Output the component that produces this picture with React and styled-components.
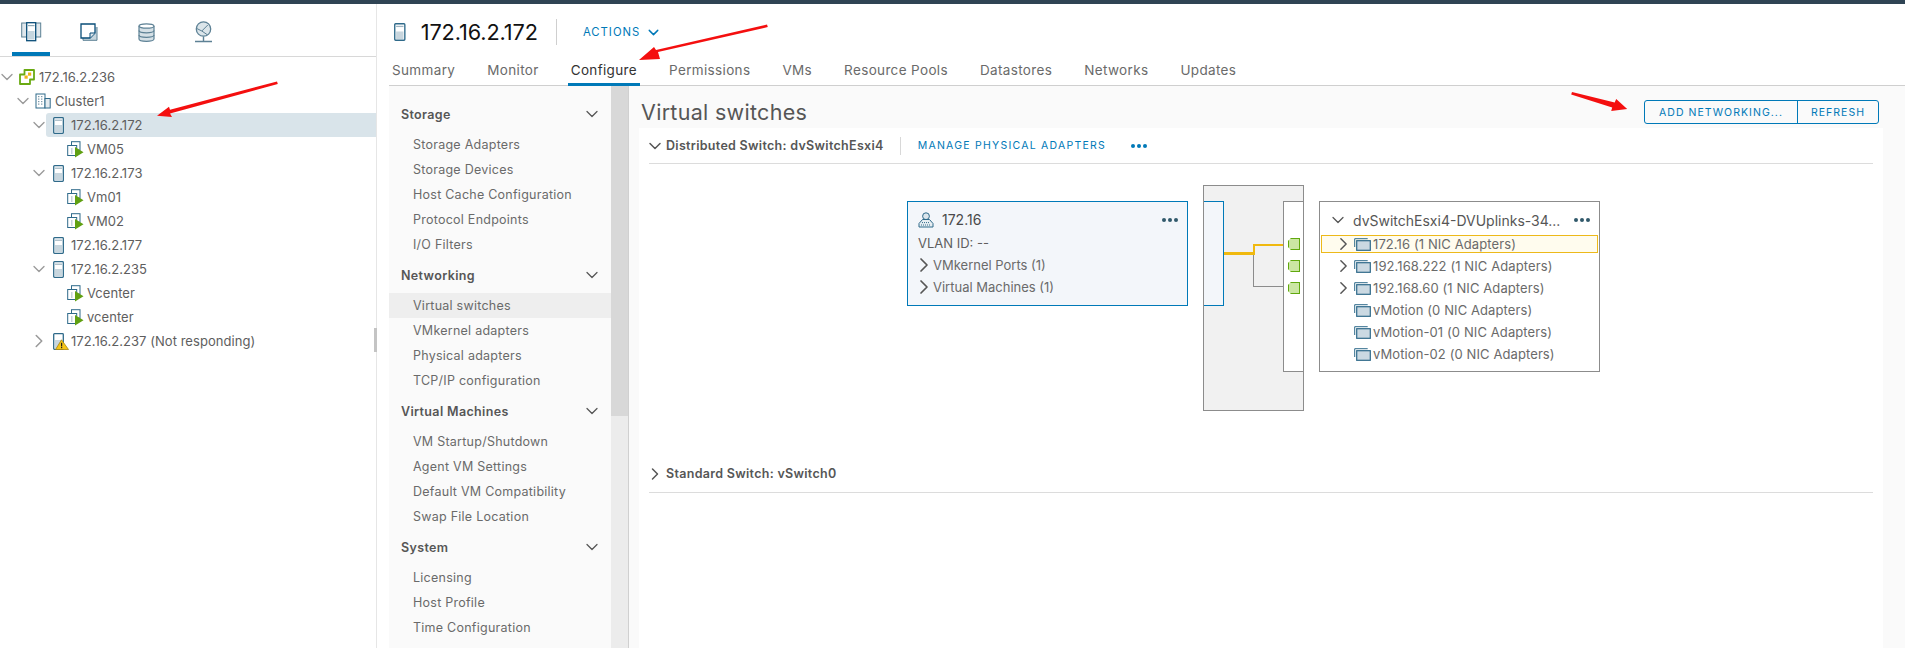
import React from "react";
import styled, { createGlobalStyle } from "styled-components";
import { ChevronDown, ChevronRight } from "lucide-react";

const Global = createGlobalStyle`
  html, body { margin: 0; padding: 0; height: 100%; overflow: hidden; background: #fff; }
  body { font-family: Inter, "Liberation Sans", sans-serif; font-size: 13px; color: #5e5e5e; }
  * { box-sizing: border-box; }
`;

const Page = styled.div`position: relative; width: 1905px; height: 648px; overflow: hidden; display: flex; flex-direction: column;`;
const TopBar = styled.div`height: 4px; background: #2f4454; flex: none;`;
const Body = styled.div`flex: 1; display: flex; min-height: 0;`;

const Left = styled.aside`width: 377px; flex: none; border-right: 1px solid #e6e6e6; position: relative;`;
const NavTabs = styled.div`height: 53px; border-bottom: 1px solid #d8d8d8; display: flex; padding-left: 12px;`;
const NavTab = styled.div`width: 38px; margin-right: 19.5px; height: 52px; display: flex; align-items: center; justify-content: center; padding-top: 8px;
  border-bottom: 4px solid ${p => (p.$active ? "#0079b8" : "transparent")};`;
const Tree = styled.div`padding-top: 8px;`;
const TreeRow = styled.div`position: relative; isolation: isolate; height: 24px; display: flex; align-items: center; color: #5e5e5e; font-size: 13px; letter-spacing: .05px;
  margin-left: ${p => p.$indent * 16}px;
  ${p => p.$selected && `&::before { content: ""; position: absolute; z-index: -1; left: 14px; right: 0; top: 0; bottom: 0; background: #d9e4ea; border-radius: 3px 0 0 3px; }`}`;
const Caret = styled.span`width: 19px; flex: none; display: flex; align-items: center; svg { margin-left: ${p => p.$ml}px; flex: none; }`;
const RowIcon = styled.span`width: ${p => (p.$leaf ? 23 : 20)}px; padding-left: ${p => (p.$leaf ? 3 : 0)}px; flex: none; display: flex; align-items: center;`;
const Handle = styled.div`position: absolute; right: -1px; top: 324px; width: 3px; height: 24px; background: #c4c4c4;`;

const Right = styled.main`flex: 1; min-width: 0; display: flex; flex-direction: column; padding-left: 12px;`;
const TitleRow = styled.div`height: 47px; display: flex; align-items: center; padding-left: 3px; padding-top: 9px;`;
const Title = styled.h1`margin: 0 0 0 13px; font-size: 21.7px; font-weight: 400; color: #111; letter-spacing: -.1px;`;
const Sep = styled.div`width: 1px; height: 26px; background: #cfcfcf; margin: 0 26px 0 18px;`;
const Actions = styled.span`display: flex; align-items: center; gap: 5px; color: #0079b8; font-size: 11.3px; letter-spacing: 1px;`;
const Tabs = styled.nav`height: 35px; display: flex; border-bottom: 1px solid #cfcfcf;`;
const Tab = styled.div`height: 35px; padding: 6px 3px 0; margin-right: 26px; display: flex; align-items: center; font-size: 13.5px; letter-spacing: .35px;
  color: ${p => (p.$active ? "#333" : "#6a6a6a")};
  border-bottom: 3px solid ${p => (p.$active ? "#0079b8" : "transparent")};`;

const Lower = styled.div`flex: 1; min-height: 0; display: flex;`;
const Side = styled.div`width: 222px; flex: none; background: #fafafa; overflow: hidden; padding-top: 15px;`;
const GroupHead = styled.div`height: 26px; display: flex; align-items: center; justify-content: space-between; padding: 0 9px 0 12px; font-weight: 600; font-size: 12.5px; letter-spacing: .35px; color: #565656; margin-bottom: 5px;`;
const SideItem = styled.div`height: 25px; display: flex; align-items: center; padding-left: 24px; font-size: 12.5px; letter-spacing: .25px; color: #6a6a6a; ${p => p.$selected && "background: #eeeeee;"}`;
const Group = styled.div`margin-bottom: 5px;
  &:last-child ${SideItem}:last-child { height: 28px; padding-top: 3px; }`;
const Scroll = styled.div`width: 18px; flex: none; background: #ececec; border-right: 1px solid #d0d0d0;`;
const Thumb = styled.div`height: 330px; background: #d8d8d8;`;

const Content = styled.div`flex: 1; min-width: 0; background: #fafafa; padding: 0 22px 0 10px; display: flex; flex-direction: column;`;
const ContentHead = styled.div`height: 42px; flex: none; display: flex; align-items: center; justify-content: space-between; padding: 10px 4px 0 2px;`;
const H2 = styled.h2`margin: 0; font-size: 21.5px; font-weight: 400; color: #565656; letter-spacing: .3px;`;
const BtnGroup = styled.div`display: flex; height: 24px; border: 1px solid #0079b8; border-radius: 3px;`;
const Btn = styled.div`display: flex; align-items: center; justify-content: center; width: ${p => p.$w}px; color: #0079b8; font-size: 10.5px; letter-spacing: 1.05px;
  & + & { border-left: 1px solid #0079b8; }`;
const Panel = styled.div`flex: 1; background: #fff; padding: 0 10px; display: flex; flex-direction: column;`;
const SwitchHead = styled.div`height: ${p => p.$h}px; flex: none; display: flex; align-items: center; border-bottom: 1px solid #dcdcdc; color: #565656; font-weight: 600; font-size: 12.5px; letter-spacing: .3px;`;
const SwitchCaret = styled.span`width: 21px; margin-left: -4px; flex: none; display: flex; color: #565656;`;
const HeadSep = styled.div`width: 1px; height: 18px; background: #d8d8d8; margin: 0 17px 0 16px;`;
const Manage = styled.span`color: #0079b8; font-weight: 400; font-size: 10.5px; letter-spacing: 1.25px;`;
const Dots = styled.span`display: inline-flex; gap: 2px; margin-left: ${p => p.$ml || 0}px;
  i { width: 4px; height: 4px; border-radius: 50%; background: ${p => p.$color || "#31596b"}; display: block; }`;

const Diagram = styled.div`position: relative; height: 291px; flex: none;`;
const Card = styled.div`position: absolute; left: ${p => p.$x}px; top: ${p => p.$y}px; width: ${p => p.$w}px; height: ${p => p.$h}px;
  border: 1px solid ${p => p.$border}; background: ${p => p.$bg}; ${p => p.$noLeft && "border-left: none;"}`;
const CardHead = styled.div`display: flex; align-items: center; height: 19px; margin: 8px 9px 0 10px; font-size: 14px; color: #4a4a4a;`;
const CardTitle = styled.span`flex: 1; margin-left: 8px;`;
const VlanLine = styled.div`font-size: 13px; margin: 3px 0 0 10px; height: 22px; display: flex; align-items: center; color: #5e5e5e;`;
const PortLine = styled.div`font-size: 13px; height: 22px; display: flex; align-items: center; margin-left: 4px; color: #6a6a6a;
  svg { margin-right: -3px; flex: none; }`;
const Wire = styled.div`position: absolute; background: ${p => p.$c}; left: ${p => p.$x}px; top: ${p => p.$y}px; width: ${p => p.$w}px; height: ${p => p.$h}px;`;
const Port = styled.div`position: absolute; left: ${p => p.$x}px; top: ${p => p.$y}px; width: 12px; height: 12px; background: #cbe6a3; border: 1px solid #60a80e;
  clip-path: polygon(3px 0, 100% 0, 100% 100%, 3px 100%, 0 9px, 0 3px);`;
const UplinkHead = styled.div`height: 33px; display: flex; align-items: center; padding: 3px 9px 0 8px; font-size: 14px; color: #565656;`;
const UplinkTitle = styled.span`flex: 1; margin-left: 5px; white-space: nowrap;`;
const UplinkRow = styled.div`height: ${p => (p.$hi ? 18 : 22)}px; margin: ${p => (p.$hi ? "0 1px 2px" : "0")}; display: flex; align-items: center; padding-left: ${p => (p.$hi ? 11 : 13)}px; font-size: 13px; color: #6a6a6a; letter-spacing: .1px;
  ${p => p.$hi && "background: #fffcee; border: 1px solid #edb91a;"}`;
const UpCaret = styled.span`width: 21px; flex: none; display: flex; color: #565656;`;
const Arrows = styled.svg`position: absolute; left: 0; top: 0; pointer-events: none;`;

const HostIcon = ({ h = 17 }) => (
  <svg width={h * 0.65 + 2} height={h} viewBox="0 0 13 17" style={{ marginLeft: 2 }}>
    <rect x=".7" y=".7" width="9.6" height="15.6" rx=".8" fill="#fff" stroke="#2f6a8a" strokeWidth="1.3" />
    <rect x="2" y="8" width="7" height="7.2" fill="#c8d6de" />
    <rect x="2" y="2.6" width="7" height="1.2" fill="#9fb4c0" />
  </svg>
);
const VmIcon = () => (
  <svg width="17" height="17" viewBox="0 0 17 17">
    <rect x="4.5" y=".7" width="8.5" height="8.5" fill="#fff" stroke="#2f6a8a" />
    <rect x=".7" y="4.5" width="9" height="10" fill="#fff" stroke="#2f6a8a" />
    <rect x="4" y="7" width="1.5" height="6" fill="#c7d4dc" />
    <path d="M8 6l8.5 5.2L8 16.5z" fill="#60a012" />
  </svg>
);
const VcIcon = () => (
  <svg width="16" height="16" viewBox="0 0 16 16">
    <path d="M5.5 1h9.5v9.5h-4V15H1V5.5h4.5z" fill="#fff" stroke="#6aaa12" strokeWidth="1.8" strokeLinejoin="round" />
    <rect x="5.5" y="6.5" width="3.2" height="3.2" fill="#efb417" />
    <rect x="9" y="3.5" width="3.2" height="3.2" fill="#efb417" />
  </svg>
);
const ClusterIcon = () => (
  <svg width="16" height="16" viewBox="0 0 16 16">
    <rect x="1" y="1" width="9" height="14" fill="#fff" stroke="#2f6a8a" />
    <rect x="10" y="5.5" width="5.2" height="9.5" fill="#e4ebef" stroke="#2f6a8a" />
    {[3, 5.5, 8, 10.5].map(y => <g key={y}><rect x="3" y={y} width="1.4" height="1.2" fill="#7d9aaa" /><rect x="6" y={y} width="1.4" height="1.2" fill="#7d9aaa" /></g>)}
  </svg>
);
const WarnHostIcon = () => (
  <svg width="16" height="17" viewBox="0 0 16 17" style={{ marginLeft: 2 }}>
    <rect x=".7" y=".7" width="9.6" height="15.6" rx=".8" fill="#fff" stroke="#2f6a8a" strokeWidth="1.3" />
    <rect x="2" y="7" width="7" height="8" fill="#c8d6de" />
    <path d="M8.5 6.8L15.5 16.5H2.6z" fill="#f5c518" stroke="#a8860f" strokeWidth=".8" strokeLinejoin="round" />
    <rect x="8" y="9.8" width="1.2" height="3.6" fill="#222" /><rect x="8" y="14" width="1.2" height="1.2" fill="#222" />
  </svg>
);
const PgIcon = () => (
  <svg width="17" height="13" viewBox="0 0 17 13" style={{ marginRight: 2, flex: "none" }}>
    <path d="M.7 9V.7h13" fill="none" stroke="#2f6a8a" />
    <rect x="2.7" y="2.7" width="13.6" height="9.6" fill="#cbd9e2" stroke="#2f6a8a" strokeWidth="1.2" />
  </svg>
);
const VmkIcon = () => (
  <svg width="16" height="16" viewBox="0 0 16 16">
    <circle cx="8" cy="4.2" r="3.4" fill="#dce6ec" stroke="#2f6a8a" />
    <path d="M4.5 7.5L1 11.5v3.5h14v-3.5l-3.5-4z" fill="#e8eef2" stroke="#2f6a8a" />
    <path d="M3 13h10M4 10.6h8" stroke="#2f6a8a" strokeDasharray="1 1" />
  </svg>
);
const NavHosts = () => (
  <svg width="21" height="20" viewBox="0 0 21 20">
    <rect x=".7" y="1" width="19" height="14" fill="#dfe7ec" stroke="#5d8195" />
    <rect x="5.7" y=".7" width="9" height="18" fill="#fff" stroke="#094d78" strokeWidth="1.3" />
    <rect x="7" y="9" width="6.5" height="8.5" fill="#c6d6df" />
    <rect x="7" y="3" width="6.5" height="1.2" fill="#8fa8b6" />
  </svg>
);
const NavVms = () => (
  <svg width="18" height="18" viewBox="0 0 18 18">
    <path d="M3 4v13.3h14V4" fill="#c7d6de" stroke="#5d8195" />
    <path d="M1 1h14v9l-5 5H1z" fill="#fff" stroke="#094d78" strokeWidth="1.3" />
    <path d="M10 15v-5h5" fill="#dfe7ec" stroke="#094d78" />
  </svg>
);
const NavStorage = () => (
  <svg width="17" height="19" viewBox="0 0 17 19">
    <path d="M1 3v13c0 1.3 3.4 2.3 7.5 2.3S16 17.3 16 16V3" fill="#d5e0e6" stroke="#5d8195" strokeWidth="1.2" />
    <ellipse cx="8.5" cy="3" rx="7.5" ry="2.2" fill="#fff" stroke="#5d8195" strokeWidth="1.2" />
    <path d="M1 7.5c0 1.3 3.4 2.3 7.5 2.3S16 8.8 16 7.5M1 12c0 1.3 3.4 2.3 7.5 2.3S16 13.3 16 12" fill="none" stroke="#5d8195" strokeWidth="1.2" />
  </svg>
);
const NavNet = () => (
  <svg width="19" height="22" viewBox="0 0 19 22">
    <circle cx="9.5" cy="8" r="7.2" fill="#dbe5ea" stroke="#5d8195" strokeWidth="1.3" />
    <path d="M2.8 7.5l5 2.5 6-6M7.8 10l5.6 3.8" fill="none" stroke="#5d8195" />
    <path d="M9.5 15.5v4.5M1 20.5h17" stroke="#5d8195" strokeWidth="1.4" />
  </svg>
);

const Down = ({ c, s = 14, sw = 1.4 }) => <ChevronDown size={s} color={c} strokeWidth={sw} />;
const RightC = ({ c, s = 14, sw = 1.6 }) => <ChevronRight size={s} color={c} strokeWidth={sw} />;

const tree = [
  { indent: 0, open: true, icon: <VcIcon />, label: "172.16.2.236" },
  { indent: 1, open: true, icon: <ClusterIcon />, label: "Cluster1" },
  { indent: 2, open: true, icon: <HostIcon />, label: "172.16.2.172", selected: true },
  { indent: 4, icon: <VmIcon />, label: "VM05", leaf: true },
  { indent: 2, open: true, icon: <HostIcon />, label: "172.16.2.173" },
  { indent: 4, icon: <VmIcon />, label: "Vm01", leaf: true },
  { indent: 4, icon: <VmIcon />, label: "VM02", leaf: true },
  { indent: 2, icon: <HostIcon />, label: "172.16.2.177" },
  { indent: 2, open: true, icon: <HostIcon />, label: "172.16.2.235" },
  { indent: 4, icon: <VmIcon />, label: "Vcenter", leaf: true },
  { indent: 4, icon: <VmIcon />, label: "vcenter", leaf: true },
  { indent: 2, closed: true, icon: <WarnHostIcon />, label: "172.16.2.237 (Not responding)" },
];

const groups = [
  ["Storage", ["Storage Adapters", "Storage Devices", "Host Cache Configuration", "Protocol Endpoints", "I/O Filters"]],
  ["Networking", ["Virtual switches", "VMkernel adapters", "Physical adapters", "TCP/IP configuration"]],
  ["Virtual Machines", ["VM Startup/Shutdown", "Agent VM Settings", "Default VM Compatibility", "Swap File Location"]],
  ["System", ["Licensing", "Host Profile", "Time Configuration", "Authentication Services"]],
];

const tabs = ["Summary", "Monitor", "Configure", "Permissions", "VMs", "Resource Pools", "Datastores", "Networks", "Updates"];

const uplinks = [
  ["172.16 (1 NIC Adapters)", true, true],
  ["192.168.222 (1 NIC Adapters)", true],
  ["192.168.60 (1 NIC Adapters)", true],
  ["vMotion (0 NIC Adapters)"],
  ["vMotion-01 (0 NIC Adapters)"],
  ["vMotion-02 (0 NIC Adapters)"],
];

const DotSet = (p) => <Dots {...p}><i /><i /><i /></Dots>;

export default function App() {
  return (
    <Page>
      <Global />
      <TopBar />
      <Body>
        <Left>
          <NavTabs>
            <NavTab $active><NavHosts /></NavTab>
            <NavTab><NavVms /></NavTab>
            <NavTab><NavStorage /></NavTab>
            <NavTab><NavNet /></NavTab>
          </NavTabs>
          <Tree>
            {tree.map(r => (
              <TreeRow key={r.label} $indent={r.indent} $selected={r.selected}>
                {!r.leaf && (
                  <Caret $ml={r.closed ? -4 : -3}>
                    {r.open && <Down c="#9a9a9a" s={20} sw={1.6} />}
                    {r.closed && <RightC c="#9a9a9a" s={22} sw={1.7} />}
                  </Caret>
                )}
                <RowIcon $leaf={r.leaf}>{r.icon}</RowIcon>
                {r.label}
              </TreeRow>
            ))}
          </Tree>
          <Handle />
        </Left>
        <Right>
          <TitleRow>
            <HostIcon h={18} />
            <Title>172.16.2.172</Title>
            <Sep />
            <Actions>ACTIONS <Down c="#0079b8" s={17} sw={2} /></Actions>
          </TitleRow>
          <Tabs>
            {tabs.map(t => <Tab key={t} $active={t === "Configure"}>{t}</Tab>)}
          </Tabs>
          <Lower>
            <Side>
              {groups.map(([h, items]) => (
                <Group key={h}>
                  <GroupHead>{h}<Down c="#565656" s={20} sw={1.5} /></GroupHead>
                  {items.map(i => <SideItem key={i} $selected={i === "Virtual switches"}>{i}</SideItem>)}
                </Group>
              ))}
            </Side>
            <Scroll><Thumb /></Scroll>
            <Content>
              <ContentHead>
                <H2>Virtual switches</H2>
                <BtnGroup>
                  <Btn $w={152}>ADD NETWORKING...</Btn>
                  <Btn $w={81}>REFRESH</Btn>
                </BtnGroup>
              </ContentHead>
              <Panel>
                <SwitchHead $h={36}>
                  <SwitchCaret><Down c="#565656" s={20} sw={1.8} /></SwitchCaret>
                  Distributed Switch: dvSwitchEsxi4
                  <HeadSep />
                  <Manage>MANAGE PHYSICAL ADAPTERS</Manage>
                  <DotSet $ml={25} $color="#0079b8" />
                </SwitchHead>
                <Diagram>
                  <Card $x={258} $y={37} $w={281} $h={105} $border="#0079b8" $bg="#f3f6fa">
                    <CardHead><VmkIcon /><CardTitle>172.16</CardTitle><DotSet /></CardHead>
                    <VlanLine>VLAN ID: --</VlanLine>
                    <PortLine><RightC c="#565656" s={24} sw={1.7} />VMkernel Ports (1)</PortLine>
                    <PortLine><RightC c="#565656" s={24} sw={1.7} />Virtual Machines (1)</PortLine>
                  </Card>
                  <Card $x={554} $y={21} $w={101} $h={226} $border="#8c8c8c" $bg="#f1f1f1" />
                  <Card $x={555} $y={37} $w={20} $h={105} $border="#0079b8" $bg="#f3f6fa" $noLeft />
                  <Card $x={634} $y={37} $w={21} $h={171} $border="#8c8c8c" $bg="#fff" />
                  <Wire $c="#8c8c8c" $x={604} $y={81} $w={1} $h={42} />
                  <Wire $c="#8c8c8c" $x={604} $y={122} $w={30} $h={1} />
                  <Wire $c="#f0b90f" $x={575} $y={88} $w={30} $h={3} />
                  <Wire $c="#f0b90f" $x={604} $y={80} $w={2} $h={11} />
                  <Wire $c="#f0b90f" $x={604} $y={80} $w={30} $h={2} />
                  <Port $x={639} $y={74} />
                  <Port $x={639} $y={96} />
                  <Port $x={639} $y={118} />
                  <Card $x={670} $y={37} $w={281} $h={171} $border="#8c8c8c" $bg="#fff">
                    <UplinkHead>
                      <Down c="#565656" s={20} sw={1.5} />
                      <UplinkTitle>dvSwitchEsxi4-DVUplinks-34...</UplinkTitle>
                      <DotSet />
                    </UplinkHead>
                    {uplinks.map(([t, c, hi]) => (
                      <UplinkRow key={t} $hi={hi}>
                        <UpCaret>{c && <RightC c="#565656" s={24} sw={1.7} />}</UpCaret>
                        <PgIcon />{t}
                      </UplinkRow>
                    ))}
                  </Card>
                </Diagram>
                <SwitchHead $h={38}>
                  <SwitchCaret><RightC c="#565656" s={20} sw={1.8} /></SwitchCaret>
                  Standard Switch: vSwitch0
                </SwitchHead>
              </Panel>
            </Content>
          </Lower>
        </Right>
      </Body>
      <Arrows width="1905" height="648" viewBox="0 0 1905 648">
        <g fill="#f40f0f">
          <path d="M277 81.5l.8 2.6L170 113.5l2 3.5-15 -1.2 12-9 1 3z" />
          <path d="M767 24.5l.8 2.6L658 52l2 7-21 1 15-13 2 3z" />
          <path d="M1572 92l-.8 2.4 41 13 -1 3.6 16-2-11-10-1.5 3.5z" />
        </g>
      </Arrows>
    </Page>
  );
}
